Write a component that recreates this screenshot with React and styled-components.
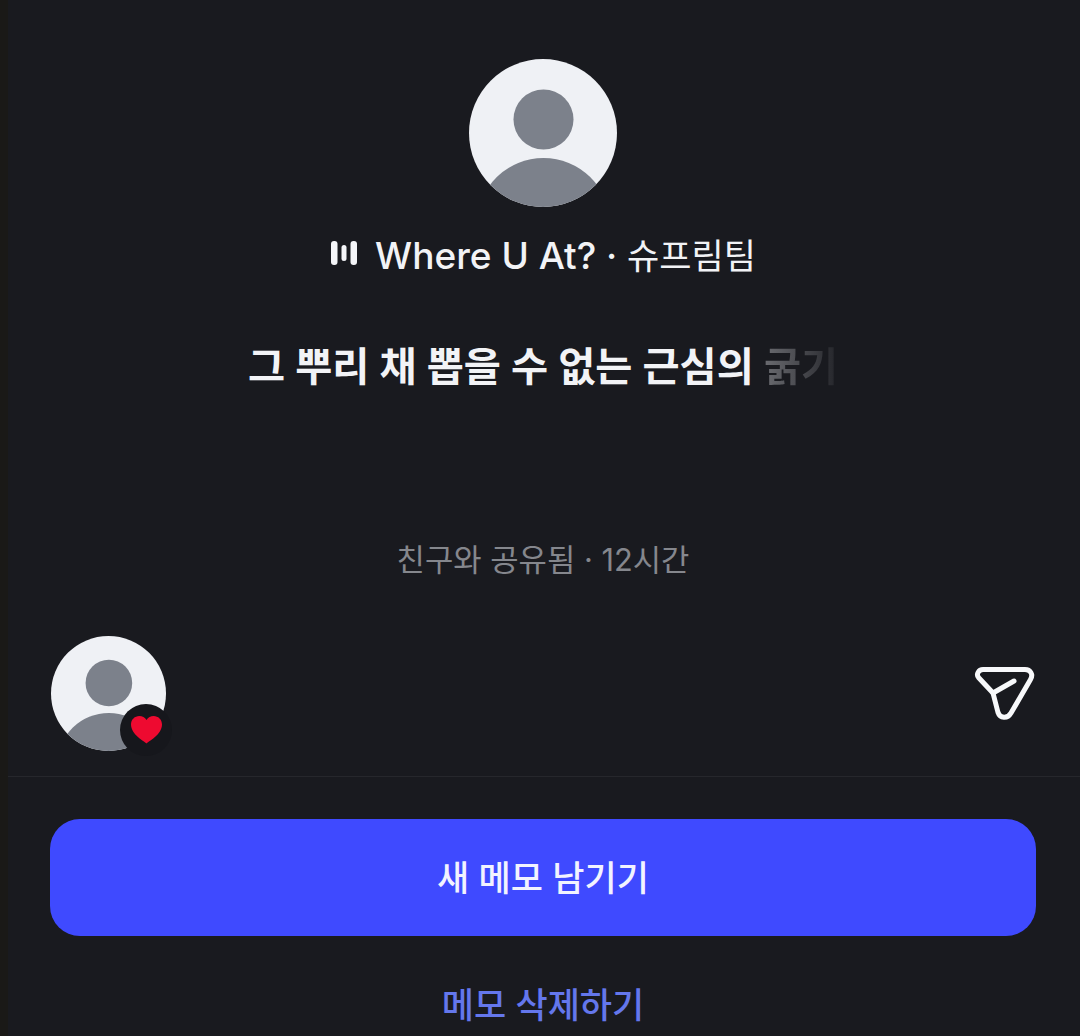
import React from "react";
import styled, { createGlobalStyle } from "styled-components";

const Global = createGlobalStyle`
  html, body { margin: 0; padding: 0; background: #18181a; }
  * { box-sizing: border-box; }
`;

const Page = styled.div`
  width: 1080px;
  height: 1036px;
  overflow: hidden;
  background: #1a1917;
  padding: 0 0 0 8px;
  font-family: Inter, "Noto Sans CJK KR", sans-serif;
`;

const Sheet = styled.main`
  height: 100%;
  background: #191a1f;
  display: flex;
  flex-direction: column;
  padding-top: 59px;
`;

const Content = styled.section`
  width: 1070px;
  display: flex;
  flex-direction: column;
  align-items: center;
`;

const TrackRow = styled.div`
  margin-top: 23px;
  height: 46px;
  display: flex;
  align-items: center;
  gap: 17px;
  color: #f2f3f6;
  white-space: nowrap;
`;

const TrackTitle = styled.span`
  font-size: 37px;
  font-weight: 500;
`;

const TrackArtist = styled.span`
  font-size: 35px;
  font-weight: 400;
`;

const MemoText = styled.h1`
  margin: 68px 0 0;
  height: 46px;
  line-height: 46px;
  font-size: 40.3px;
  font-weight: 600;
  color: #f2f3f6;
  white-space: nowrap;
`;

const Fading = styled.span`
  background: linear-gradient(90deg, #6a6b70, #3a3b40 70%, #232429);
  -webkit-background-clip: text;
  background-clip: text;
  color: transparent;
`;

const Meta = styled.p`
  margin: 150px 0 0;
  height: 40px;
  line-height: 40px;
  font-size: 30.8px;
  font-weight: 400;
  color: #85878d;
  white-space: nowrap;
`;

const ReactionRow = styled.div`
  margin-top: 56px;
  height: 141px;
  padding: 0 45px 0 43px;
  display: flex;
  justify-content: space-between;
  align-items: flex-start;
  border-bottom: 1px solid #26272c;
`;

const ReactorWrap = styled.div`
  position: relative;
  width: 115px;
  height: 115px;
`;

const HeartBadge = styled.div`
  position: absolute;
  left: 69px;
  top: 68px;
  width: 52px;
  height: 52px;
  border-radius: 50%;
  background: #16171c;
  display: flex;
  align-items: center;
  justify-content: center;
`;

const SendButton = styled.button`
  margin-top: 30px;
  padding: 0;
  width: 61px;
  height: 56px;
  border: 0;
  background: none;
  display: block;
`;

const Actions = styled.div`
  padding: 42px 44px 0 42px;
  display: flex;
  flex-direction: column;
  align-items: stretch;
`;

const PrimaryButton = styled.button`
  height: 117px;
  padding: 0 0 5px;
  border: 0;
  border-radius: 30px;
  background: #3f4aff;
  color: #f2f3ff;
  font-family: inherit;
  font-size: 35px;
  font-weight: 500;
`;

const DeleteLink = styled.button`
  margin-top: 40px;
  height: 50px;
  border: 0;
  background: none;
  color: #6477ec;
  font-family: inherit;
  font-size: 35px;
  font-weight: 500;
`;

const Avatar = ({ size }) => (
  <svg width={size} height={size} viewBox="0 0 148 148" style={{ display: "block" }}>
    <defs>
      <clipPath id={`clip${size}`}>
        <circle cx="74" cy="74" r="74" />
      </clipPath>
    </defs>
    <circle cx="74" cy="74" r="74" fill="#eff1f5" />
    <g clipPath={`url(#clip${size})`} fill="#7c818b">
      <circle cx="74.5" cy="60.5" r="30" />
      <ellipse cx="74.5" cy="164" rx="66" ry="65" />
    </g>
  </svg>
);

const BarsIcon = () => (
  <svg width="28" height="24" viewBox="0 0 28 24">
    <g fill="#f4f5f8">
      <rect x="1" y="0" width="6.5" height="24" rx="3" />
      <rect x="11.500" y="4" width="5" height="16" rx="2.500" />
      <rect x="20.500" y="0" width="6.500" height="24" rx="3" />
    </g>
  </svg>
);

const HeartIcon = () => (
  <svg width="31" height="28" viewBox="0 0 31 28">
    <path
      d="M15.500 27.500C13.500 25.500 0 18.500 0 8.500C0 3.500 3.800 0 8.300 0C11.300 0 14 1.500 15.500 4C17 1.500 19.700 0 22.700 0C27.200 0 31 3.500 31 8.500C31 18.500 17.500 25.500 15.500 27.500Z"
      fill="#ee0a30"
    />
  </svg>
);

const SendIcon = () => (
  <svg width="61" height="56" viewBox="0 0 61 56" fill="none" stroke="#f8f9fb" strokeWidth="5" strokeLinecap="round" strokeLinejoin="round">
    <path d="M9 3.500H51C56.500 3.500 59.500 8.500 56.500 13.500L37 47C33.500 53 26 52.500 24 46.500L19 27L4.500 11.500C2 8.500 4.500 3.500 9 3.500Z" />
    <path d="M19 27L40 15" />
  </svg>
);

export default function App() {
  return (
    <>
      <Global />
      <Page>
        <Sheet>
          <Content>
            <Avatar size={148} />
            <TrackRow>
              <BarsIcon />
              <span>
                <TrackTitle>Where U At? · </TrackTitle>
                <TrackArtist>슈프림팀</TrackArtist>
              </span>
            </TrackRow>
            <MemoText>
              그 뿌리 채 뽑을 수 없는 근심의 <Fading>굵기</Fading>
            </MemoText>
            <Meta>친구와 공유됨 · 12시간</Meta>
          </Content>
          <ReactionRow>
            <ReactorWrap>
              <Avatar size={115} />
              <HeartBadge>
                <HeartIcon />
              </HeartBadge>
            </ReactorWrap>
            <SendButton aria-label="send">
              <SendIcon />
            </SendButton>
          </ReactionRow>
          <Actions>
            <PrimaryButton>새 메모 남기기</PrimaryButton>
            <DeleteLink>메모 삭제하기</DeleteLink>
          </Actions>
        </Sheet>
      </Page>
    </>
  );
}
